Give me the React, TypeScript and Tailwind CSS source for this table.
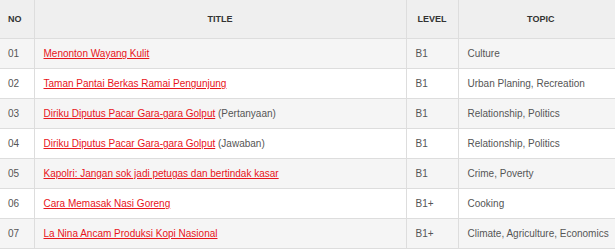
import React from 'react';

type Lesson = {
  no: string;
  title: string;
  note?: string;
  level: string;
  topic: string;
};

const lessons: Lesson[] = [
  { no: '01', title: 'Menonton Wayang Kulit', level: 'B1', topic: 'Culture' },
  { no: '02', title: 'Taman Pantai Berkas Ramai Pengunjung', level: 'B1', topic: 'Urban Planing, Recreation' },
  { no: '03', title: 'Diriku Diputus Pacar Gara-gara Golput', note: '(Pertanyaan)', level: 'B1', topic: 'Relationship, Politics' },
  { no: '04', title: 'Diriku Diputus Pacar Gara-gara Golput', note: '(Jawaban)', level: 'B1', topic: 'Relationship, Politics' },
  { no: '05', title: 'Kapolri: Jangan sok jadi petugas dan bertindak kasar', level: 'B1', topic: 'Crime, Poverty' },
  { no: '06', title: 'Cara Memasak Nasi Goreng', level: 'B1+', topic: 'Cooking' },
  { no: '07', title: 'La Nina Ancam Produksi Kopi Nasional', level: 'B1+', topic: 'Climate, Agriculture, Economics' },
];

export default function App() {
  return (
    <div className="w-[615px] h-[249px] overflow-hidden bg-white font-['Liberation_Sans',Arial,sans-serif]">
      <table className="w-[615px] table-fixed border-collapse text-[10px] text-[#555]">
        <colgroup>
          <col className="w-[34px]" />
          <col className="w-[372px]" />
          <col className="w-[52px]" />
          <col />
        </colgroup>
        {/* Header */}
        <thead>
          <tr className="h-[38px] bg-[#efefef] text-[9px] font-bold uppercase text-[#333]">
            <th className="border-r border-b border-[#dddddd] pl-2 pt-px text-left">No</th>
            <th className="border-r border-b border-[#dddddd] pt-px text-center">Title</th>
            <th className="border-r border-b border-[#dddddd] pt-px text-center">Level</th>
            <th className="border-b border-[#dddddd] pl-2 pt-px text-center">Topic</th>
          </tr>
        </thead>
        <tbody>
          {lessons.map((l, i) => (
            <tr key={l.no} className={`h-[30px] ${i % 2 === 0 ? 'bg-[#f5f5f5]' : 'bg-white'}`}>
              <td className="border-r border-b border-[#dddddd] pl-2 pt-px">{l.no}</td>
              <td className="border-r border-b border-[#dddddd] pl-[9px] pt-px whitespace-nowrap">
                <a href="#" className="text-[#e8141b] underline">
                  {l.title}
                </a>
                {l.note && <span> {l.note}</span>}
              </td>
              <td className="border-r border-b border-[#dddddd] pl-[9px] pt-px">{l.level}</td>
              <td className="border-b border-[#dddddd] pl-[9px] pt-px whitespace-nowrap">{l.topic}</td>
            </tr>
          ))}
        </tbody>
      </table>
    </div>
  );
}
